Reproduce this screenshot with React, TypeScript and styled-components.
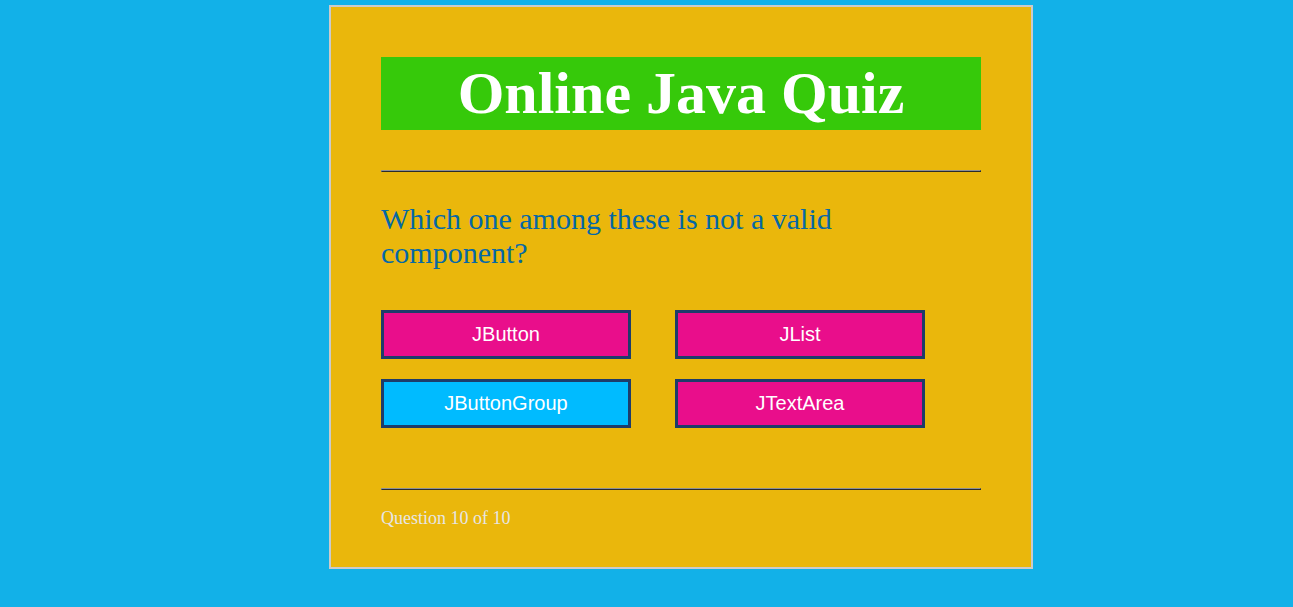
import React, { useState } from "react";
import styled, { createGlobalStyle } from "styled-components";

const GlobalStyle = createGlobalStyle`
  body {
    margin: 0;
    background: #12b1e8;
    font-family: "Liberation Serif", "Times New Roman", serif;
  }
`;

const Card = styled.main`
  box-sizing: border-box;
  width: 100%;
  max-width: 704px;
  margin: 5px auto 0;
  padding: 50px 50px 39px;
  border: 2px solid #cbcbcb;
  background: #eab70c;
`;

const Page = styled.div`
  display: flow-root;
  padding-left: 69px;
`;

const Title = styled.h1`
  margin: 0;
  background: #36c90a;
  color: #fff;
  font-size: 60px;
  line-height: 73px;
  font-weight: bold;
  text-align: center;
`;

const Rule = styled.hr`
  height: 0;
  margin: 40px 0 0;
  border: 1px solid;
  border-color: #8e9094 #2b2b2b #2b2b2b #8e9094;
`;

const Question = styled.p`
  margin: 30px 0 0;
  color: #0568a6;
  font-size: 30px;
  line-height: 34px;
`;

const Choices = styled.div`
  display: flex;
  flex-wrap: wrap;
  gap: 20px 44px;
  margin: 40px 0 60px;
`;

const Choice = styled.button`
  width: 250px;
  height: 49px;
  padding: 0;
  border: 3px solid #1d3c6a;
  background: #e90e8b;
  color: #fff;
  font-family: "Liberation Sans", Arial, sans-serif;
  font-size: 20px;
  cursor: pointer;

  &:hover,
  &[aria-pressed="true"] {
    background: #00bbff;
  }
`;

const Progress = styled.p`
  margin: 18px 0 0;
  color: #e6e6e6;
  font-size: 18px;
  line-height: 20px;
`;

const choices = ["JButton", "JList", "JButtonGroup", "JTextArea"];

export default function App() {
  const [selected, setSelected] = useState("JButtonGroup");
  return (
    <Page>
      <GlobalStyle />
      <Card>
        <Title>Online Java Quiz</Title>
        <Rule />
        <Question>Which one among these is not a valid component?</Question>
        <Choices>
          {choices.map((choice) => (
            <Choice
              key={choice}
              type="button"
              aria-pressed={choice === selected}
              onClick={() => setSelected(choice)}
            >
              {choice}
            </Choice>
          ))}
        </Choices>
        <Rule />
        <Progress>Question 10 of 10</Progress>
      </Card>
    </Page>
  );
}
